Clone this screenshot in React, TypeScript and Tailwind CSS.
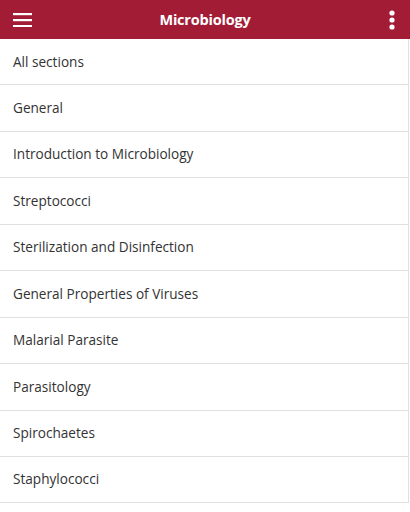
import React from "react";

const items = [
  "All sections",
  "General",
  "Introduction to Microbiology",
  "Streptococci",
  "Sterilization and Disinfection",
  "General Properties of Viruses",
  "Malarial Parasite",
  "Parasitology",
  "Spirochaetes",
  "Staphylococci",
];

export default function App() {
  return (
    <div className="w-[410px] h-[512px] overflow-hidden bg-white" style={{ fontFamily: '"Open Sans", "Noto Sans", sans-serif' }}>
      <div className="h-[39px] bg-[#a31c35] flex items-center justify-between px-[13px] relative">
        <svg width="19" height="14" viewBox="0 0 19 14" className="block">
          <rect x="0" y="0" width="19" height="2.2" fill="#fff" />
          <rect x="0" y="6" width="19" height="2.2" fill="#fff" />
          <rect x="0" y="12" width="19" height="2.2" fill="#fff" />
        </svg>
        <div className="absolute left-0 right-0 text-center text-white font-bold text-[14.5px] tracking-[-0.2px] pointer-events-none">
          Microbiology
        </div>
        <svg width="8" height="20" viewBox="0 0 8 20" className="block mr-[1px]">
          <circle cx="4" cy="3" r="2.6" fill="#fff" />
          <circle cx="4" cy="10" r="2.6" fill="#fff" />
          <circle cx="4" cy="17" r="2.6" fill="#fff" />
        </svg>
      </div>
      <div className="border-r border-[#e0e0e0] w-[409px]">
        {items.map((t) => (
          <div
            key={t}
            className="h-[46.45px] box-border border-b border-[#e0e0e0] flex items-center pl-[13px] text-[13.6px] text-[#333]"
          >
            {t}
          </div>
        ))}
      </div>
    </div>
  );
}
